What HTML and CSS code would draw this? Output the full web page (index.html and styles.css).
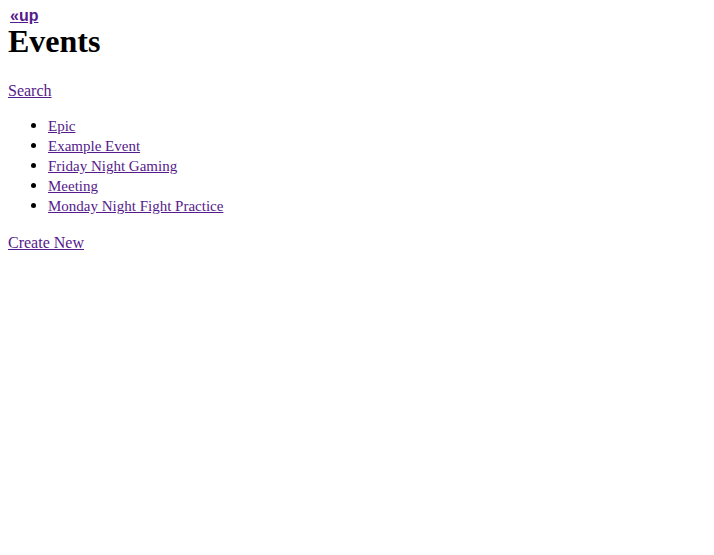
FILE: index.html
```html
<!DOCTYPE html>
<html>
<head>
<meta charset="utf-8">
<title>Events</title>
<link rel="stylesheet" href="styles.css">
</head>
<body>
<div class="up"><a href="#">«up</a></div>
<h1 class="title">Events</h1>
<p class="para"><a href="#">Search</a></p>
<ul class="events">
<li><a href="#">Epic</a></li>
<li><a href="#">Example Event</a></li>
<li><a href="#">Friday Night Gaming</a></li>
<li><a href="#">Meeting</a></li>
<li><a href="#">Monday Night Fight Practice</a></li>
</ul>
<p class="para"><a href="#">Create New</a></p>
</body>
</html>
```
FILE: styles.css
```css
body {
  margin: 8px;
  font-family: "Liberation Serif", serif;
  font-size: 16px;
  color: #000;
  background: #fff;
}
a { color: #551a8b; }
.up {
  font-family: "Liberation Sans", sans-serif;
  font-weight: bold;
  font-size: 16px;
  line-height: 15px;
  padding-left: 2px;
}
.title {
  font-size: 32px;
  margin: 0;
  padding-bottom: 6px;
  line-height: 37px;
}
.para { margin: 16px 0; line-height: 18px; }
.events { margin: 16px 0 18px; padding-left: 40px; font-size: 15px; }
.events li { line-height: 20px; height: 20px; }
.events li::marker { font-size: 17px; }
```
